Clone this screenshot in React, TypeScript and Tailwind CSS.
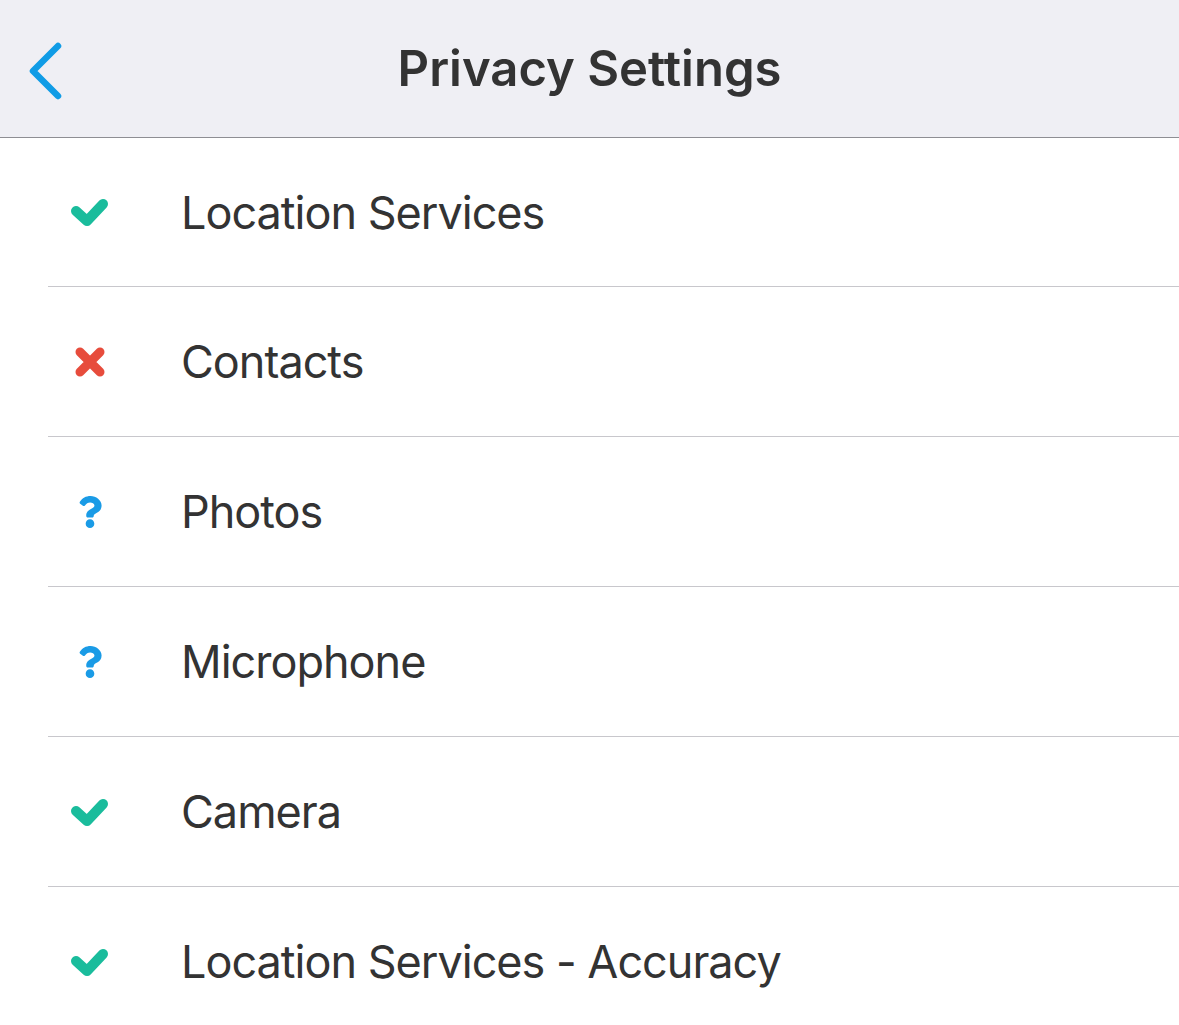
import React from "react";
import { FaQuestion } from "react-icons/fa";

type Status = "yes" | "no" | "unknown";

const items: { label: string; status: Status }[] = [
  { label: "Location Services", status: "yes" },
  { label: "Contacts", status: "no" },
  { label: "Photos", status: "unknown" },
  { label: "Microphone", status: "unknown" },
  { label: "Camera", status: "yes" },
  { label: "Location Services - Accuracy", status: "yes" },
];

function StatusIcon({ status }: { status: Status }) {
  if (status === "yes")
    return (
      <svg width="40" height="32" viewBox="0 0 40 32" fill="none">
        <polyline
          points="6,15 17,25 33,8"
          stroke="#1abc9c"
          strokeWidth="10"
          strokeLinecap="round"
          strokeLinejoin="round"
        />
      </svg>
    );
  if (status === "no")
    return (
      <svg width="32" height="32" viewBox="0 0 32 32" fill="none">
        <path
          d="M6 6 L26 26 M26 6 L6 26"
          stroke="#e74c3c"
          strokeWidth="9"
          strokeLinecap="round"
        />
      </svg>
    );
  return <FaQuestion size={32} className="text-[#1a9be6]" />;
}

export default function App() {
  return (
    <div
      className="w-[1179px] h-[1025px] bg-white overflow-hidden text-[#333333]"
      style={{ fontFamily: "Inter, 'Noto Sans', sans-serif" }}
    >
      <div className="relative h-[138px] bg-[#efeff4] border-b border-[#8e8e93] flex items-center justify-center">
        <svg
          className="absolute left-[24px] top-[40px]"
          width="42"
          height="62"
          viewBox="0 0 42 62"
          fill="none"
        >
          <polyline
            points="34,6 9,31 34,56"
            stroke="#109ce6"
            strokeWidth="6.5"
            strokeLinecap="round"
            strokeLinejoin="round"
          />
        </svg>
        <span className="text-[49px] font-semibold leading-none">Privacy Settings</span>
      </div>
      <div className="flex flex-col">
        {items.map((it, i) => (
          <div
            key={it.label}
            className={`flex items-center ml-[48px] border-b border-[#c8c7cc] ${i === 0 ? "h-[149px]" : "h-[150px]"}`}
          >
            <div className="w-[84px] flex justify-center items-center">
              <StatusIcon status={it.status} />
            </div>
            <span className="ml-[49px] text-[45px] tracking-[-1px] leading-none">{it.label}</span>
          </div>
        ))}
      </div>
    </div>
  );
}
